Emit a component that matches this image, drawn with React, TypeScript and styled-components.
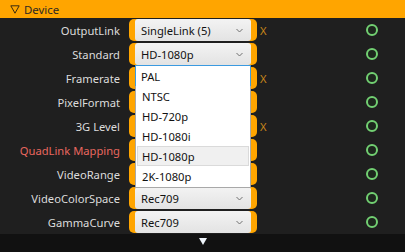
import React from "react";
import styled, { createGlobalStyle } from "styled-components";

interface iRow {
  label: string;
  value: string;
  warn?: boolean;
  flagged?: boolean;
  open?: boolean;
}

const rows: iRow[] = [
  { label: "OutputLink", value: "SingleLink (5)", flagged: true },
  { label: "Standard", value: "HD-1080p" },
  { label: "Framerate", value: "PAL", flagged: true, open: true },
  { label: "PixelFormat", value: "" },
  { label: "3G Level", value: "", flagged: true },
  { label: "QuadLink Mapping", value: "", warn: true },
  { label: "VideoRange", value: "" },
  { label: "VideoColorSpace", value: "Rec709" },
  { label: "GammaCurve", value: "Rec709" },
];

const options = ["NTSC", "HD-720p", "HD-1080i", "HD-1080p", "2K-1080p"];

const Chevron = () => (
  <svg width="7" height="5" viewBox="0 0 7 5">
    <path d="M0.5 1 L3.5 4 L6.5 1" fill="none" stroke="#707070" strokeWidth="1" />
  </svg>
);

const Status = () => (
  <svg width="14" height="14" viewBox="0 0 14 14">
    <circle cx="7" cy="7" r="5" fill="#1d261d" stroke="#72d072" strokeWidth="2" />
  </svg>
);

const Caret = () => (
  <svg width="10" height="9" viewBox="0 0 10 9">
    <path d="M0.8 0.8 L9.2 0.8 L5 8.2 Z" fill="none" stroke="#3a2c10" strokeWidth="1" />
  </svg>
);

const App: React.FC = () => {
  return (
    <>
      <Global />
      <Panel>
        <Header>
          <Caret />
          <Title>Device</Title>
        </Header>
        <List>
          {rows.map((r, i) => (
            <Row key={i}>
              <Label warn={r.warn}>{r.label}</Label>
              <Bracket>
                {r.open ? (
                  <Edit>
                    {r.value}
                    <Popup>
                      {options.map((o) => (
                        <Item key={o} hot={o === "HD-1080p"}>
                          {o}
                        </Item>
                      ))}
                    </Popup>
                  </Edit>
                ) : (
                  <Combo>
                    <span>{r.value}</span>
                    <Chevron />
                  </Combo>
                )}
              </Bracket>
              <Flag>{r.flagged ? "X" : ""}</Flag>
              <Dot>
                <Status />
              </Dot>
            </Row>
          ))}
        </List>
        <Footer>
          <Arrow />
        </Footer>
      </Panel>
    </>
  );
};

export default App;

const Global = createGlobalStyle`
  html, body {
    margin: 0;
    padding: 0;
    background: #1f1f1f;
  }
  body {
    font-family: "Noto Sans", "Open Sans", sans-serif;
    font-size: 11.2px;
  }
`;

const Panel = styled.div`
  width: 405px;
  height: 252px;
  display: flex;
  flex-direction: column;
  background: #1f1f1f;
  overflow: hidden;
`;

const Header = styled.div`
  height: 18px;
  background: #ffa500;
  display: flex;
  align-items: center;
  padding-left: 10px;
`;

const Title = styled.span`
  margin-left: 4px;
  color: #2e2a22;
  font-size: 11.4px;
`;

const List = styled.div`
  display: flex;
  flex-direction: column;
`;

const Row = styled.div`
  height: 24px;
  display: flex;
  align-items: center;
`;

const Label = styled.div<{ warn?: boolean }>`
  width: 120px;
  text-align: right;
  color: ${({ warn }) => (warn ? "#e8675f" : "#dcdcdc")};
  padding-right: 9px;
  white-space: nowrap;
`;

const Bracket = styled.div`
  position: relative;
  width: 128px;
  height: 22px;
  background: #ffa500;
  border-radius: 5px;
  display: flex;
  padding: 0 6px;
  box-sizing: border-box;
`;

const Combo = styled.div`
  flex: 1;
  display: flex;
  align-items: center;
  justify-content: space-between;
  padding: 0 8px 0 6px;
  background: linear-gradient(#f3f3f3, #e3e3e3);
  border-radius: 3px;
  color: #111;
`;

const Edit = styled.div`
  position: relative;
  flex: 1;
  height: 22px;
  box-sizing: border-box;
  display: flex;
  align-items: center;
  padding-left: 5px;
  margin-top: -2px;
  background: #fff;
  border: 1px solid #3b9ae0;
  color: #111;
  z-index: 2;
`;

const Popup = styled.div`
  position: absolute;
  top: 100%;
  left: -1px;
  right: -1px;
  background: #fff;
  border: 1px solid #a8a8a8;
  border-top: none;
  display: flex;
  flex-direction: column;
  padding-bottom: 1px;
`;

const Item = styled.div<{ hot?: boolean }>`
  height: 20px;
  box-sizing: border-box;
  display: flex;
  align-items: center;
  padding-left: 4px;
  color: #111;
  background: ${({ hot }) => (hot ? "#f0f0f0" : "transparent")};
  border: 1px solid ${({ hot }) => (hot ? "#dadada" : "transparent")};
  margin: 0 1px;
`;

const Flag = styled.div`
  width: 105px;
  padding-left: 3px;
  color: #c8861a;
`;

const Dot = styled.div`
  display: flex;
  align-items: center;
`;

const Footer = styled.div`
  flex: 1;
  background: #111111;
  display: flex;
  justify-content: center;
  padding-top: 4px;
`;

const Arrow = styled.div`
  width: 0;
  height: 0;
  border-left: 4px solid transparent;
  border-right: 4px solid transparent;
  border-top: 7px solid #eef4fa;
`;
